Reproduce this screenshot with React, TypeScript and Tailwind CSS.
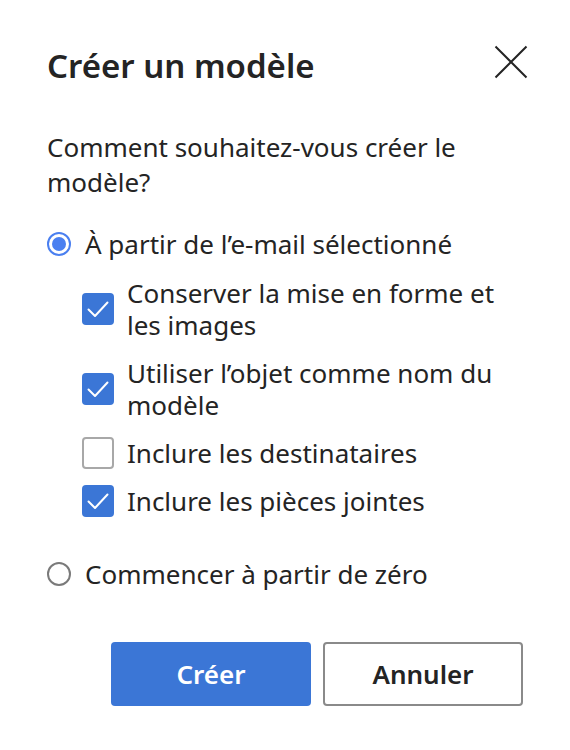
import React from "react";

const font = { fontFamily: '"Noto Sans", "Open Sans", sans-serif' };

const Radio = ({ checked, label }: { checked?: boolean; label: string }) => (
  <label className="flex items-center gap-[14px] leading-[32px]">
    {checked ? (
      <span className="flex h-[24px] w-[24px] shrink-0 items-center justify-center rounded-full border-2 border-[#4a7ff0]">
        <span className="h-[14px] w-[14px] rounded-full bg-[#4a7ff0]" />
      </span>
    ) : (
      <span className="h-[24px] w-[24px] shrink-0 rounded-full border-2 border-[#7a7a7a]" />
    )}
    <span>{label}</span>
  </label>
);

const Check = ({ checked, label }: { checked?: boolean; label: React.ReactNode }) => (
  <label className="flex items-center gap-[13px] leading-[32px]">
    {checked ? (
      <span className="flex h-[32px] w-[32px] shrink-0 items-center justify-center rounded-[4px] bg-[#3b76d6]">
        <svg width="24" height="24" viewBox="0 0 24 24" fill="none">
          <path d="M2.5 12.5l6.5 6.5L21.5 5.5" stroke="white" strokeWidth="2" strokeLinecap="round" strokeLinejoin="round" />
        </svg>
      </span>
    ) : (
      <span className="h-[32px] w-[32px] shrink-0 rounded-[4px] border-2 border-[#a8a8a8] bg-white" />
    )}
    <span>{label}</span>
  </label>
);

export default function App() {
  return (
    <div className="h-[750px] w-[570px] bg-white px-[47px] pt-[48px] text-[#242424]" style={font}>
      <div className="flex items-center justify-between">
        <h1 className="text-[33px] font-semibold leading-[36px]">Créer un modèle</h1>
        <button className="-mr-[5px] -mt-[8px] text-[#242424]" aria-label="Fermer">
          <svg width="34" height="34" viewBox="0 0 34 34" fill="none">
            <path d="M1.5 1.5l31 31M32.5 1.5l-31 31" stroke="currentColor" strokeWidth="2" />
          </svg>
        </button>
      </div>

      <p className="mt-[46px] pr-[20px] text-[26px] leading-[35px]">
        Comment souhaitez-vous créer le modèle?
      </p>

      <div className="mt-[28px] text-[26px]">
        <Radio checked label="À partir de l’e-mail sélectionné" />
        <div className="ml-[35px] mt-[17px] flex flex-col gap-[16px]">
          <Check checked label={<>Conserver la mise en forme et<br />les images</>} />
          <Check checked label={<>Utiliser l’objet comme nom du<br />modèle</>} />
          <Check label="Inclure les destinataires" />
          <Check checked label="Inclure les pièces jointes" />
        </div>
        <div className="mt-[41px]">
          <Radio label="Commencer à partir de zéro" />
        </div>
      </div>

      <div className="mt-[52px] flex justify-end gap-[12px]">
        <button className="h-[64px] w-[200px] rounded-[4px] bg-[#3b76d6] text-[26px] font-semibold text-white">
          Créer
        </button>
        <button className="h-[64px] w-[200px] rounded-[4px] border-2 border-[#8a8a8a] bg-white text-[26px] font-semibold text-[#242424]">
          Annuler
        </button>
      </div>
    </div>
  );
}
